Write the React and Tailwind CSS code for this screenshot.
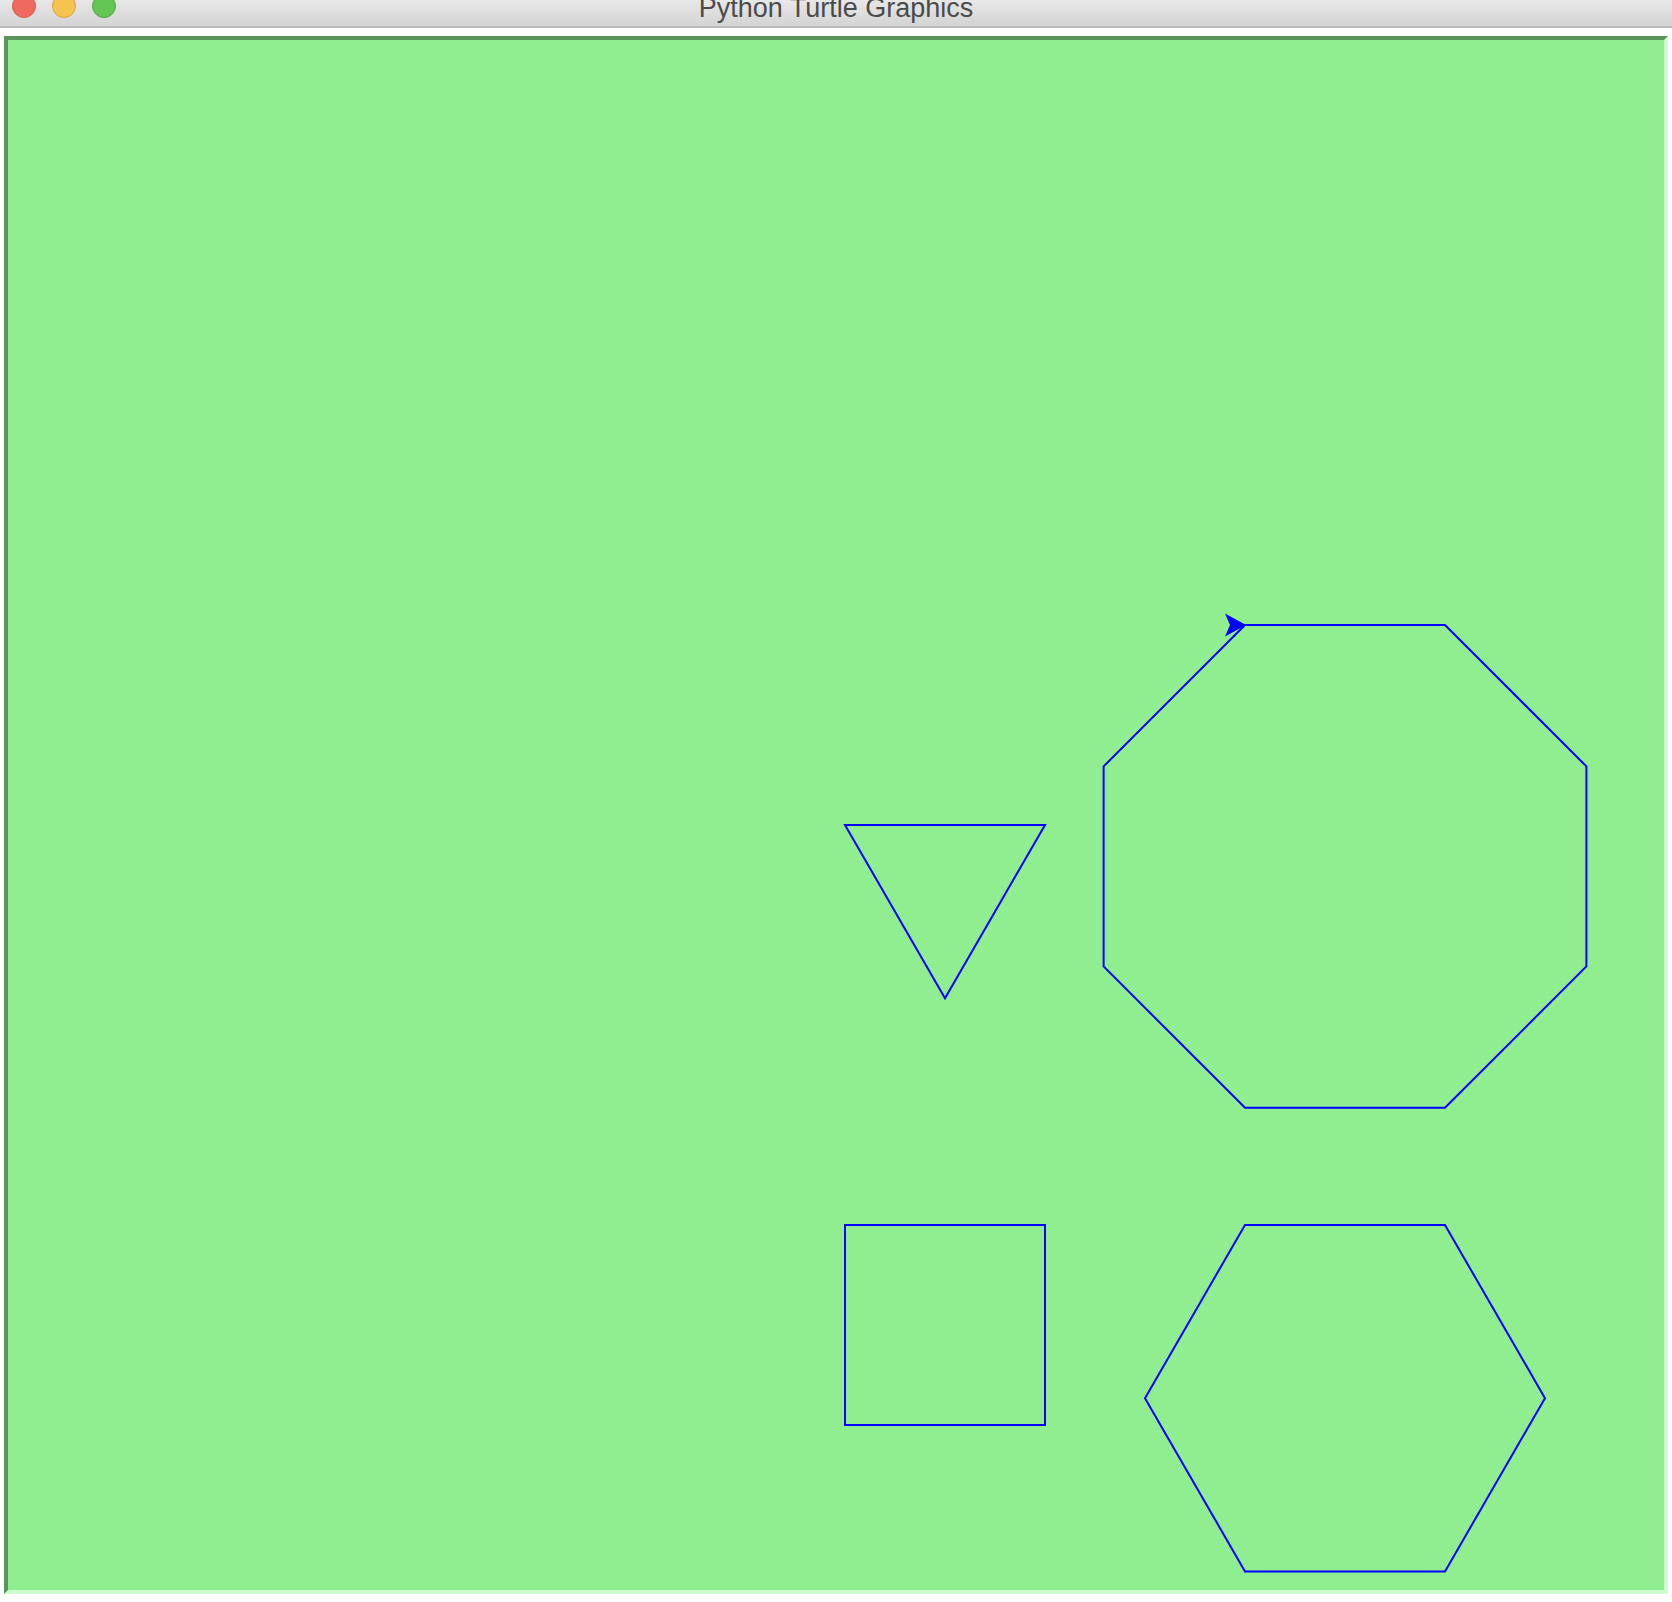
import React from "react";

export default function App() {
  const tri = "845,825 1045,825 945,998.2";
  const sq = "845,1225 1045,1225 1045,1425 845,1425";
  const oct =
    "1245,625 1445,625 1586.4,766.4 1586.4,966.4 1445,1107.8 1245,1107.8 1103.6,966.4 1103.6,766.4";
  const hex = "1245,1225 1445,1225 1545,1398.2 1445,1571.4 1245,1571.4 1145,1398.2";
  return (
    <div className="w-[1672px] h-[1602px] bg-white overflow-hidden flex flex-col">
      <div className="relative h-[28px] shrink-0 bg-gradient-to-b from-[#e8e8e8] to-[#d3d3d3] border-b-2 border-[#b9b9b9] flex items-start overflow-hidden">
        <div className="flex gap-[16px] pl-[12px] mt-[-6.5px]">
          <div className="w-[24px] h-[24px] rounded-full bg-[#ee6a5f] border border-[#d9584d]" />
          <div className="w-[24px] h-[24px] rounded-full bg-[#f6c250] border border-[#dca540]" />
          <div className="w-[24px] h-[24px] rounded-full bg-[#62c554] border border-[#51a93f]" />
        </div>
        <div
          className="absolute left-0 right-0 top-[-7px] text-center text-[27px] leading-[30px] text-[#4b4b4b]"
          style={{ fontFamily: '"Liberation Sans", Arial, sans-serif' }}
        >
          Python Turtle Graphics
        </div>
      </div>
      <div className="mt-[8px] ml-[4px] w-[1664px] h-[1558px] border-4 border-t-[#5b955b] border-l-[#5b955b] border-r-[#ccffcc] border-b-[#ccffcc] bg-[#90ee90]">
        <svg width="1656" height="1550" viewBox="8 40 1656 1550" className="block">
          <g fill="none" stroke="#0000ff" strokeWidth="2" strokeLinejoin="miter">
            <polygon points={tri} />
            <polygon points={sq} />
            <polygon points={oct} />
            <polygon points={hex} />
          </g>
          <polygon points="1246,625 1225,613.5 1230,625 1225,636.5" fill="#0000ff" />
        </svg>
      </div>
    </div>
  );
}
